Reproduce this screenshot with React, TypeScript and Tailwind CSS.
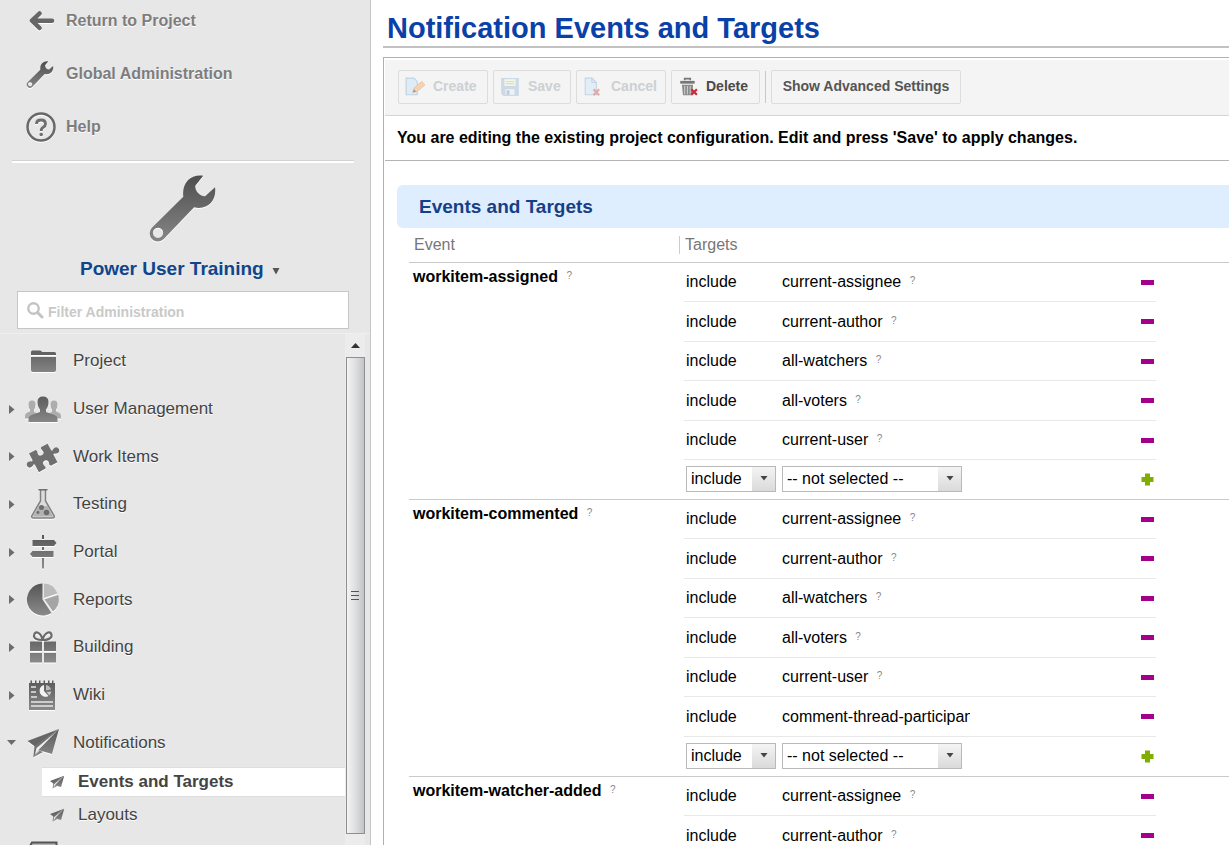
import { useId, type ReactNode } from "react";

type IconName =
  | "folder"
  | "users"
  | "puzzle"
  | "flask"
  | "signs"
  | "pie"
  | "gift"
  | "notebook"
  | "plane"
  | "book";

function NavIcon({ name, className }: { name: IconName; className: string }) {
  const id = useId();
  const g = `url(#${id})`;
  const shapes: Record<IconName, ReactNode> = {
    folder: (
      <>
        <path d="M8 14V11Q8 9.500 9.500 9.500H17Q18.500 9.500 19 11H31.500Q33 11 33 12.500V14Z" fill="#626262" />
        <path d="M8 16H33V29Q33 31 31 31H10Q8 31 8 29Z" fill={g} />
      </>
    ),
    users: (
      <>
        <g fill="#adadad">
          <path d="M5.500 15.500Q5.500 11.500 9 11.500T12.500 15.500Q12.500 19 11 20.500L11 23L16 25V29.500H2V27Q2 24.500 4 23.800L7 22.500V20.500Q5.500 19 5.500 15.500Z" />
          <path d="M27.500 15.500Q27.500 11.500 31 11.500T34.500 15.500Q34.500 19 33 20.500V22.500L36 23.800Q38 24.500 38 27V29.500H24V25L29 23V20.500Q27.500 19 27.500 15.500Z" />
        </g>
        <path
          d="M14.500 13Q14.500 7.500 20 7.500T25.500 13Q25.500 18 23 20.500V23L31.500 26Q34.500 27 34.500 30V33H5.500V30Q5.500 27 8.500 26L17 23V20.500Q14.500 18 14.500 13Z"
          fill={g}
        />
      </>
    ),
    puzzle: (
      <path
        transform="translate(20 20.500) rotate(-28)"
        d="M-10.500-10H-3Q-1.500-8-2.800-6.500Q-4-3 0-2.500Q4-3 2.800-6.500Q1.500-8 3-10H10.500V-2.500Q11.500-1 12.500-2.500Q17.500-4.500 18 0Q17.500 4.500 12.500 2.500Q11.500 1 10.500 2.500V11H3Q1.500 9 2.800 7.500Q4 4 0 3.500Q-4 4-2.800 7.500Q-1.500 9-3 11H-10.500V2.500Q-11.500 1-12.500 2.500Q-17.500 4.500-18 0Q-17.500-4.500-12.500-2.500Q-11.500-1-10.500-2.500Z"
        fill="#6f6f6f"
      />
    ),
    flask: (
      <>
        <path d="M17.500 6V17L9 31.500Q8 34 10.500 34H29.500Q32 34 31 31.500L22.500 17V6" fill="#dcdcdc" stroke="#808080" strokeWidth="1.500" />
        <path d="M15.500 5.800H24.500" stroke="#6c6c6c" strokeWidth="1.500" />
        <path d="M15.500 22H24.500L30 32.500H10Z" fill="#b2b2b2" />
        <circle cx="18.500" cy="23.500" r="2.500" fill="#6c6c6c" />
        <circle cx="23.500" cy="28.500" r="2.800" fill="#6c6c6c" />
        <circle cx="15" cy="28.500" r="1.400" fill="#6c6c6c" />
      </>
    ),
    signs: (
      <g fill={g}>
        <path d="M19 3H21V7H19ZM19 15H21V18H19ZM19 26H21V36.500H19Z" />
        <path d="M9.500 8H31L33.500 11L31 14H9.500Z" />
        <path d="M9.500 19H30.500V25H9.500L7 22Z" />
      </g>
    ),
    pie: (
      <>
        <path d="M19.500 19.500V3.500A16 16 0 1 0 28.500 33Z" fill={g} />
        <path d="M21 18V3.500A15.500 15.500 0 0 1 34.500 13.500Z" fill="#bbb" />
        <path d="M21.500 19.500L35.200 15A16 16 0 0 1 30 31.500Z" fill="#a5a5a5" />
      </>
    ),
    gift: (
      <>
        <path
          d="M19.500 13Q12 13 11 9.500Q11 5 14.500 5.500Q18.500 7 19.500 13Q21 7 25 5.500Q29 5 28.500 9.500Q27 13 19.500 13Z"
          fill="none"
          stroke="#6a6a6a"
          strokeWidth="2.200"
        />
        <path d="M7 14.500H19V24H7ZM21 14.500H33V24H21ZM7 26H19V35.500H7ZM21 26H33V35.500H21Z" fill={g} />
      </>
    ),
    notebook: (
      <>
        <path d="M6 8H7.500V5.500H9V8H12V5.500H13.500V8H16V5.500H17.500V8H20.500V5.500H22V8H25V5.500H26.500V8H29V5.500H30.500V8H32V35H6Z" fill={g} />
        <path d="M8 12H13M8 17H13M8 22H14M8 27H30M8 31H30" stroke="#e7e7e7" strokeWidth="1.500" />
        <path d="M21 10A6 6 0 1 0 25.500 21L21 16Z" fill="#f2f2f2" />
        <path d="M23 10A6 6 0 0 1 28 14.500L23 15.500Z" fill="#bbb" />
        <path d="M23.500 17L28.500 16.500L26.500 20.500Z" fill="#ccc" />
      </>
    ),
    plane: (
      <>
        <path d="M36 6L4.500 18L12 23.500Z" fill="#666" />
        <path d="M36 6L11.500 23L10.300 34.500L16 27.500Z" fill="#717171" />
        <path d="M33.500 8.500L13.500 25L12 31.500Z" fill="#efefef" />
        <path d="M36 6L15.500 27L29 31ZM16.500 27.500L10.300 34.500L20 29Z" fill={g} />
      </>
    ),
    book: (
      <>
        <path d="M9 4.500H33.500V36H7V8Z" fill="#b5b5b5" stroke="#555" strokeWidth="2" />
        <path d="M5 8.500H11M5 14H11" stroke="#555" strokeWidth="2" />
      </>
    ),
  };
  return (
    <svg viewBox="0 0 40 40" className={className} aria-hidden="true">
      <defs>
        <linearGradient id={id} gradientUnits="userSpaceOnUse" x1="0" y1="5" x2="0" y2="35">
          <stop offset="0" stopColor="#585858" />
          <stop offset="1" stopColor="#8a8a8a" />
        </linearGradient>
      </defs>
      {shapes[name]}
    </svg>
  );
}

function Wrench({ className }: { className: string }) {
  const id = useId();
  return (
    <svg viewBox="0 0 69 68" className={className} aria-hidden="true">
      <defs>
        <linearGradient id={id} x1="0" y1="0" x2="0" y2="1">
          <stop offset="0" stopColor="#4e4e4e" />
          <stop offset="1" stopColor="#868686" />
        </linearGradient>
      </defs>
      <path
        fillRule="evenodd"
        fill={`url(#${id})`}
        d="M55.500 .8C43-1 33.500 8 35.300 22L3.500 53.500A8.200 8.200 0 1 0 15.500 65L46.300 32.800C60 36 69.500 26 67.500 12.500L57.500 21.500C53 22 47 17 47.500 11ZM9.700 53.500A5.200 5.200 0 1 1 9.600 53.500Z"
      />
    </svg>
  );
}

const topLinks = [
  {
    label: "Return to Project",
    icon: (
      <svg viewBox="0 0 30 30" className="size-[30px]" aria-hidden="true">
        <path d="M26 14.700H7M13.500 7.500L6 14.700L13.500 22" fill="none" stroke="#666" strokeWidth="4.500" strokeLinecap="round" strokeLinejoin="round" />
      </svg>
    ),
  },
  { label: "Global Administration", icon: <Wrench className="h-[27px] w-[28px]" /> },
  {
    label: "Help",
    icon: (
      <svg viewBox="0 0 30 30" className="size-[30px]" aria-hidden="true">
        <circle cx="15" cy="15" r="13.500" fill="none" stroke="#686868" strokeWidth="2.500" />
        <path d="M10.500 12Q10.500 8 15 8T19.500 12Q19.500 14 17.300 15.300T15.200 19" fill="none" stroke="#6e6e6e" strokeWidth="2.800" />
        <circle cx="15.200" cy="22.500" r="1.800" fill="#707070" />
      </svg>
    ),
  },
];

const navItems: { label: string; icon: IconName; leaf?: boolean; open?: boolean }[] = [
  { label: "Project", icon: "folder", leaf: true },
  { label: "User Management", icon: "users" },
  { label: "Work Items", icon: "puzzle" },
  { label: "Testing", icon: "flask" },
  { label: "Portal", icon: "signs" },
  { label: "Reports", icon: "pie" },
  { label: "Building", icon: "gift" },
  { label: "Wiki", icon: "notebook" },
  { label: "Notifications", icon: "plane", open: true },
];

function Sidebar() {
  return (
    <aside className="flex w-[371px] shrink-0 flex-col overflow-hidden border-r border-[#c4c4c4] bg-[#e7e7e7] [text-shadow:0_1px_0_#fff]">
      <nav aria-label="Shortcuts" className="flex shrink-0 flex-col gap-[13px] pt-px">
        {topLinks.map((l) => (
          <a key={l.label} href="#" className="flex h-10 items-center pl-[26px] text-[16px] font-bold text-[#7d7d7d]">
            <span className="flex w-10 drop-shadow-[0_1px_0_#fff]">{l.icon}</span>
            {l.label}
          </a>
        ))}
      </nav>
      <hr className="mt-[13px] mr-4 ml-3 h-[3px] shrink-0 border-t border-b-2 border-t-[#d2d2d2] border-b-white" />
      <Wrench className="mt-3 ml-[148px] h-[67px] w-[69px] shrink-0 drop-shadow-[0_1px_0_#fff]" />
      <button type="button" className="mt-[13px] ml-20 flex h-7 shrink-0 items-center gap-2 self-start text-[19px] font-bold text-[#10458c]">
        Power User Training
        <svg viewBox="0 0 8 8" className="mt-1 size-2" aria-hidden="true">
          <path d="M.5 1H7.500L4 7.500Z" fill="#555" />
        </svg>
      </button>
      <label className="mr-[21px] ml-[17px] mt-2 flex h-[38px] shrink-0 items-center gap-1 border border-[#c6c6c6] bg-white px-2">
        <svg viewBox="0 0 18 18" className="size-[18px] shrink-0" aria-hidden="true">
          <circle cx="7.500" cy="7.500" r="5.200" fill="none" stroke="#c3c3c3" strokeWidth="2.400" />
          <path d="M11.500 11.500L16 16" stroke="#c3c3c3" strokeWidth="3" strokeLinecap="round" />
        </svg>
        <input
          type="text"
          aria-label="Filter Administration"
          placeholder="Filter Administration"
          className="w-full min-w-0 pt-1 text-[14px] font-bold outline-none placeholder:text-[#c9c9c9]"
        />
      </label>
      <div className="mt-1 flex min-h-0 flex-1 border-t border-[#efefef] pr-[5px]">
        <ul className="min-w-0 flex-1 overflow-hidden pt-[3px] text-[17px] text-[#444]">
          {navItems.map((item) => (
            <li key={item.label} className="h-12 [&:nth-child(3n)]:h-[47px]">
              <a href="#" className="flex h-full items-center">
                <span className="flex w-[23px] shrink-0 pl-[7px]">
                  {!item.leaf && (
                    <svg viewBox="0 0 9 9" className="size-[9px]" aria-hidden="true">
                      <path d={item.open ? "M0 2H9L4.500 7Z" : "M2 0L7.500 4.500L2 9Z"} fill="#6c6c6c" />
                    </svg>
                  )}
                </span>
                <NavIcon name={item.icon} className="size-10 shrink-0 drop-shadow-[0_1px_0_#fff]" />
                <span className="pl-2.5">{item.label}</span>
              </a>
            </li>
          ))}
          <li>
            <ul className="flex flex-col gap-[3px] pt-px pb-1">
              <li className="ml-[42px] border-y border-[#dedede] bg-white">
                <a href="#" aria-current="page" className="flex h-7 items-center gap-3 pl-1.5 font-bold">
                  <NavIcon name="plane" className="size-[18px]" />
                  Events and Targets
                </a>
              </li>
              <li className="ml-[42px]">
                <a href="#" className="flex h-[30px] items-center gap-3 pl-1.5">
                  <NavIcon name="plane" className="size-[18px]" />
                  Layouts
                </a>
              </li>
            </ul>
          </li>
          <li className="h-12 pt-1 pl-[23px]">
            <NavIcon name="book" className="size-10" />
          </li>
        </ul>
        <div className="flex w-5 shrink-0 flex-col items-center bg-[#ececec] pb-[11px]">
          <svg viewBox="0 0 19 23" className="h-[23px] w-[19px] shrink-0" aria-hidden="true">
            <path d="M5 14L9.500 9L14 14Z" fill="#333" />
          </svg>
          <div className="flex w-[19px] flex-1 flex-col items-center justify-center gap-[3px] border border-[#8f8f8f] bg-linear-to-r from-[#f3f3f3] via-[#dfdfe1] to-[#c2c4c6]">
            <span className="h-px w-2 bg-[#555]" />
            <span className="h-px w-2 bg-[#555]" />
            <span className="h-px w-2 bg-[#555]" />
          </div>
        </div>
      </div>
    </aside>
  );
}

function Toolbar() {
  const btn = "flex h-[34px] shrink-0 items-center gap-2 rounded-xs border border-[#dcdcdc] px-1.5 text-[14px] font-bold";
  return (
    <div className="flex h-14 items-center gap-[5px] border-b border-[#d6d6d6] bg-[#f4f4f4] pb-0.5 pl-[13px]">
      <button type="button" disabled className={`${btn} w-[90px] text-[#cdd0d3]`}>
        <svg viewBox="0 0 18 18" className="size-5" aria-hidden="true">
          <path d="M1 1H8L11 4V16H1Z" fill="#e0ecf5" stroke="#bdd3e4" />
          <path d="M7 14L8 10L15 4L18 7L11 13Z" fill="#f4d3b4" stroke="#e8c4a2" strokeWidth=".8" />
          <path d="M7 14L8 11L10 13Z" fill="#999" />
        </svg>
        Create
      </button>
      <button type="button" disabled className={`${btn} w-[78px] text-[#cdd0d3]`}>
        <svg viewBox="0 0 18 18" className="size-5" aria-hidden="true">
          <path d="M1 1H17V17H3L1 15Z" fill="#cddae6" />
          <path d="M4 2H14V8H4Z" fill="#f4f8e8" />
          <path d="M5 4H13M5 6H13" stroke="#d5dfc4" />
          <path d="M5 11H13V16H5Z" fill="#edf2f6" />
          <path d="M6 12H8.500V16H6Z" fill="#bccbd9" />
        </svg>
        Save
      </button>
      <button type="button" disabled className={`${btn} w-[90px] text-[#cdd0d3]`}>
        <svg viewBox="0 0 18 18" className="size-5" aria-hidden="true">
          <path d="M2 1H8L12 5V16H2Z" fill="#e3edf5" stroke="#c3d5e4" />
          <path d="M8 1V5H12" fill="none" stroke="#c3d5e4" />
          <path d="M9.500 11L14.500 16.500M14.500 11L9.500 16.500" stroke="#e5a9a4" strokeWidth="2" />
        </svg>
        Cancel
      </button>
      <button type="button" className={`${btn} w-[89px] text-[#4a4a4a]`}>
        <svg viewBox="0 0 18 18" className="size-5" aria-hidden="true">
          <path d="M2 3.500H15V6H2Z" fill="#777" />
          <path d="M6 3V1.500H11V3" fill="none" stroke="#777" strokeWidth="1.500" />
          <path d="M3.500 7H13.500L13 16.500H4.500Z" fill="#8b8b8b" />
          <path d="M6 8V15.500M8.500 8V15.500M11 8V15.500" stroke="#c9c9c9" />
          <path d="M12 11L17 16M17 11L12 16" stroke="#c8283c" strokeWidth="2" />
        </svg>
        Delete
      </button>
      <span className="h-8 w-px bg-[#c8c8c8]" />
      <button type="button" className={`${btn} w-[190px] justify-center text-[#555]`}>
        Show Advanced Settings
      </button>
    </div>
  );
}

const base = ["current-assignee", "current-author", "all-watchers", "all-voters", "current-user"];
const groups = [
  { event: "workitem-assigned", targets: base },
  { event: "workitem-commented", targets: [...base, "comment-thread-participants"] },
  { event: "workitem-watcher-added", targets: base },
];

function HelpMark({ topic }: { topic: string }) {
  return (
    <a href="#" aria-label={`Help for ${topic}`} className="ml-1 align-[3px] text-[10px] leading-none font-normal text-[#888]">
      ?
    </a>
  );
}

function Picker({ label, option, className }: { label: string; option: string; className: string }) {
  return (
    <div className={`grid h-[26px] items-stretch ${className}`}>
      <select aria-label={label} className="col-start-1 row-start-1 w-full appearance-none border border-[#b9b9b9] bg-white pr-6 pl-1 text-[16px] leading-5">
        <option>{option}</option>
      </select>
      <span className="pointer-events-none col-start-1 row-start-1 my-px mr-px flex w-[23px] items-center justify-center justify-self-end bg-linear-to-b from-[#f4f4f4] to-[#dadada]">
        <svg viewBox="0 0 8 5" className="h-[5px] w-2" aria-hidden="true">
          <path d="M.5 0H7.500L4 4.500Z" fill="#444" />
        </svg>
      </span>
    </div>
  );
}

function EventsTable() {
  const inner = "border-b border-[#e8e8e8]";
  const outer = "border-b border-[#cacaca]";
  return (
    <table className="w-full table-fixed border-separate border-spacing-0 text-left text-[16px] leading-5">
      <colgroup>
        <col className="w-[275px]" />
        <col className="w-[98px]" />
        <col className="w-[188px]" />
        <col className="w-[186px]" />
        <col />
      </colgroup>
      <thead className="text-[#777]">
        <tr className="h-[35px]">
          <th className={`${outer} font-normal`}>
            <div className="flex items-center justify-between pr-1 pl-[5px]">
              Event
              <span className="h-[18px] w-px bg-[#ccc]" />
            </div>
          </th>
          <th colSpan={4} className={`${outer} pl-px font-normal`}>
            Targets
          </th>
        </tr>
      </thead>
      {groups.map(({ event, targets }) => (
        <tbody key={event}>
          {targets.map((t, i) => (
            <tr key={t} className="odd:h-[39px] even:h-10">
              {i === 0 && (
                <th scope="rowgroup" rowSpan={targets.length + 1} className={`${outer} pt-1 pl-1 align-top font-bold`}>
                  {event} <HelpMark topic={event} />
                </th>
              )}
              <td className={`${inner} pl-0.5`}>include</td>
              <td className={`${inner} overflow-hidden whitespace-nowrap`}>
                {t} <HelpMark topic={t} />
              </td>
              <td className={`${inner} pr-0.5`}>
                <button type="button" aria-label={`Remove ${t}`} className="ml-auto flex h-4 w-[13px] items-center">
                  <span className="h-[5px] w-full bg-[#a5008c]" />
                </button>
              </td>
              <td />
            </tr>
          ))}
          <tr className="h-10">
            <td className={`${outer} pb-0.5 pl-0.5`}>
              <Picker label={`Mode for ${event}`} option="include" className="w-[90px]" />
            </td>
            <td className={`${outer} pb-0.5`}>
              <Picker label={`Target for ${event}`} option="-- not selected --" className="w-[180px]" />
            </td>
            <td className={`${outer} pr-0.5`}>
              <button type="button" aria-label={`Add target to ${event}`} className="ml-auto flex">
                <svg viewBox="0 0 13 13" className="size-[13px]" aria-hidden="true">
                  <path d="M4 .5H9V4H12.500V9H9V12.500H4V9H.5V4H4Z" fill="#7fae00" />
                </svg>
              </button>
            </td>
            <td className={outer} />
          </tr>
        </tbody>
      ))}
    </table>
  );
}

export default function App() {
  return (
    <div className="flex h-screen overflow-hidden bg-white font-['Liberation_Sans',Arial,sans-serif] text-black">
      <Sidebar />
      <main className="ml-3 flex min-w-0 flex-1 flex-col overflow-hidden">
        <h1 className="shrink-0 border-b-2 border-[#c2c2c2] pt-2.5 pl-1 text-[29px] leading-9 font-bold text-[#0a41a8]">
          Notification Events and Targets
        </h1>
        <section className="mt-[9px] min-h-0 flex-1 overflow-hidden border-t border-l border-[#b0b0b0] pt-0.5 pl-px">
          <Toolbar />
          <p className="h-[45px] border-b border-[#b4b4b4] pl-3 text-[16px] leading-[43px] font-bold">
            You are editing the existing project configuration. Edit and press &apos;Save&apos; to apply changes.
          </p>
          <h2 className="mt-6 ml-3 h-[43px] rounded-l-md bg-[#dfeeff] pl-[22px] text-[19px] leading-[43px] font-bold text-[#173f86]">
            Events and Targets
          </h2>
          <div className="pl-6">
            <EventsTable />
          </div>
        </section>
      </main>
    </div>
  );
}
